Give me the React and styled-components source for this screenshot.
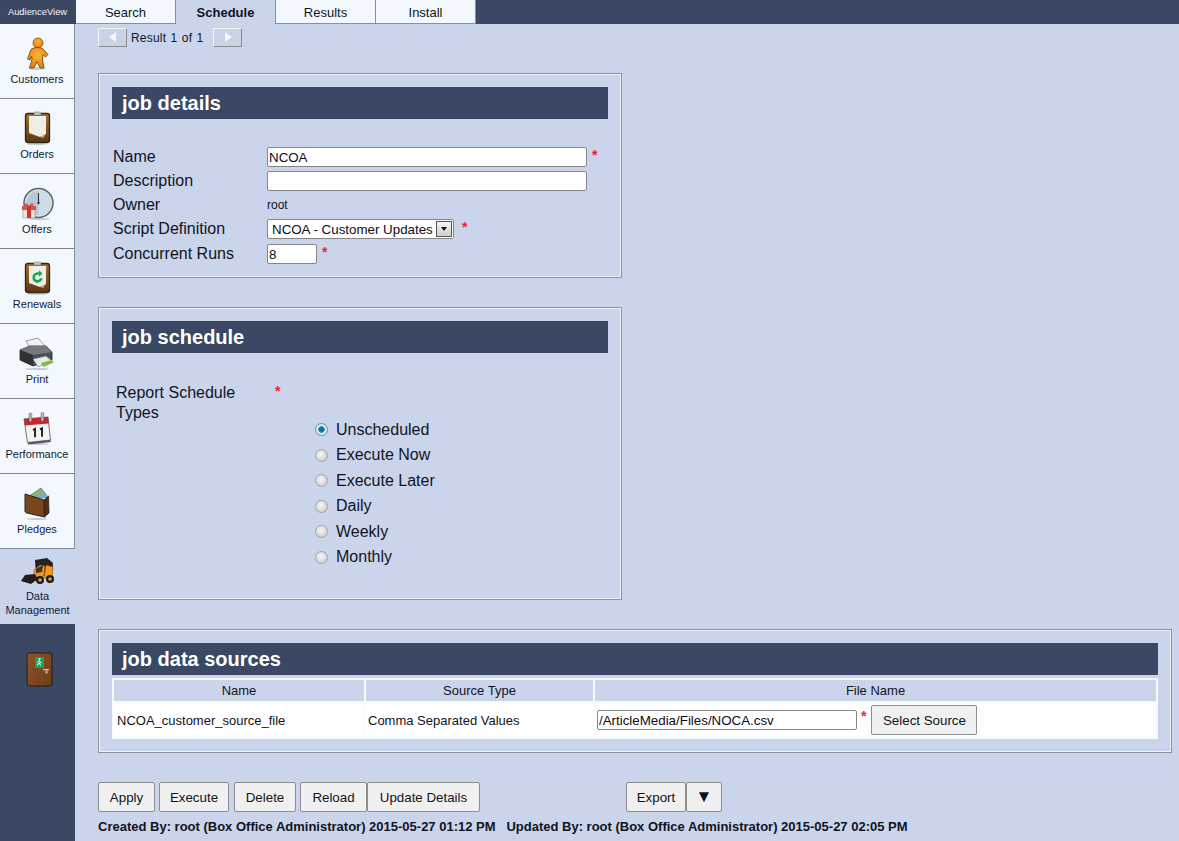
import React from 'react';
import styled, { createGlobalStyle } from 'styled-components';

const GlobalStyle = createGlobalStyle`
  html, body {
    margin: 0;
    padding: 0;
    height: 100%;
    background: #cad5ec;
    overflow: hidden;
  }
  body {
    font-family: "Liberation Sans", Arial, sans-serif;
    color: #11131c;
  }
  * { box-sizing: border-box; }
`;

const Page = styled.div`
  display: flex;
  height: 841px;
`;

const Sidebar = styled.nav`
  width: 75px;
  flex-shrink: 0;
  display: flex;
  flex-direction: column;
  background: #3a4863;
`;

const Brand = styled.div`
  height: 24px;
  color: #f2f5fb;
  font-size: 9.4px;
  line-height: 24px;
  text-align: center;
`;

const NavItem = styled.div`
  height: 75px;
  display: flex;
  flex-direction: column;
  align-items: center;
  justify-content: ${p => (p.$active ? 'flex-start' : 'flex-end')};
  padding-bottom: 12px;
  padding-top: ${p => (p.$active ? '7px' : '0')};
  background: ${p => (p.$active ? '#cad5ec' : '#f3f8fe')};
  border-right: ${p => (p.$active ? 'none' : '1px solid #8a8f99')};
  border-bottom: ${p => (p.$active ? 'none' : '1px solid #7f8590')};
  color: #0e1a33;
  font-size: 11px;
  line-height: 14px;
  text-align: center;
`;

const NavIcon = styled.svg`
  width: 36px;
  height: 36px;
  margin-bottom: 2px;
  flex-shrink: 0;
`;

const ActiveLabel = styled.div`
  margin-top: -5px;
`;

const ExitSlot = styled.div`
  display: flex;
  justify-content: center;
  padding-top: 27px;
`;

const Main = styled.main`
  flex: 1;
  min-width: 0;
`;

const TabBar = styled.div`
  height: 24px;
  display: flex;
  padding-left: 1px;
  background: #3a4863;
`;

const Tab = styled.div`
  width: 100px;
  height: 24px;
  padding-top: 5px;
  text-align: center;
  font-size: 13px;
  line-height: 15px;
  font-weight: ${p => (p.$active ? 'bold' : 'normal')};
  background: ${p => (p.$active ? '#cad5ec' : '#f3f8fe')};
  border-right: 1px solid #8a8f99;
  border-bottom: ${p => (p.$active ? 'none' : '1px solid #8a8f99')};
`;

const Content = styled.div`
  padding: 3px 8px 0 23px;
`;

const Pager = styled.div`
  display: flex;
  align-items: center;
  height: 20px;
  font-size: 12px;
`;

const PagerButton = styled.div`
  width: 29px;
  height: 19px;
  display: flex;
  align-items: center;
  justify-content: center;
  background: #c9d3e8;
  border: 1px solid;
  border-color: #f4f6fb #8b8b8b #8b8b8b #f4f6fb;
`;

const PagerText = styled.span`
  width: 86px;
  padding: 1px 0 0 4px;
  letter-spacing: 0.2px;
  word-spacing: 0.8px;
`;

const Arrow = styled.svg`
  width: 10px;
  height: 10px;
  fill: #f5f7fc;
`;

const Panel = styled.section`
  width: ${p => (p.$wide ? '1074px' : '524px')};
  height: ${p => p.$height}px;
  margin-top: ${p => p.$top}px;
  padding: 13px 13px 0 13px;
  border: 1px solid #8d9096;
  box-shadow: inset 0 0 0 1px #eef2fa;
`;

const PanelTitle = styled.h2`
  margin: 0;
  height: 32px;
  padding-left: 10px;
  background: #3a4863;
  color: #fff;
  font-size: 20px;
  line-height: 32px;
  font-weight: bold;
`;

const DetailRows = styled.div`
  padding-top: 26px;
  padding-left: 1px;
`;

const Row = styled.div`
  display: flex;
  align-items: center;
  height: 24px;
  font-size: 16px;
  &:last-child {
    margin-top: 1px;
  }
`;

const RowLabel = styled.div`
  width: 154px;
  flex-shrink: 0;
`;

const TextInput = styled.input`
  width: ${p => p.$w}px;
  height: 20px;
  padding: 0 1px 0 1px;
  border: 1px solid #858585;
  border-radius: 2px;
  background: #fff;
  color: #0b0b1a;
  font-family: "Liberation Sans", Arial, sans-serif;
  font-size: 13.33px;
  outline: none;
`;

const Required = styled.span`
  color: #f01c30;
  font-size: 14px;
  font-weight: bold;
  line-height: 14px;
  margin-left: ${p => p.$gap || 5}px;
  align-self: flex-start;
  margin-top: ${p => p.$down || 3}px;
`;

const PlainValue = styled.span`
  font-size: 12px;
`;

const SelectBox = styled.div`
  width: 187px;
  height: 20px;
  display: flex;
  align-items: center;
  justify-content: space-between;
  padding-left: 4px;
  padding-right: 1px;
  background: #fff;
  border: 1px solid #858585;
  border-radius: 2px;
  color: #0b0b1a;
  font-size: 13.33px;
  white-space: nowrap;
`;

const SelectArrow = styled.div`
  width: 16px;
  height: 16px;
  display: flex;
  align-items: center;
  justify-content: center;
  background: linear-gradient(#f6f6f6, #cfcfcf);
  border: 1px solid #555;
  &::after {
    content: '';
    border-left: 3.5px solid transparent;
    border-right: 3.5px solid transparent;
    border-top: 4px solid #111;
  }
`;

const ScheduleBody = styled.div`
  padding: 30px 0 0 4px;
  font-size: 16px;
`;

const ScheduleHead = styled.div`
  display: flex;
  height: 34px;
  line-height: 20px;
`;

const ScheduleLabel = styled.div`
  width: 158px;
`;

const RadioList = styled.div`
  padding-left: 199px;
`;

const RadioRow = styled.label`
  display: flex;
  align-items: center;
  gap: 8px;
  height: 25.5px;
`;

const Radio = styled.input`
  appearance: none;
  margin: 0;
  width: 13px;
  height: 13px;
  border-radius: 50%;
  border: 1px solid #a4a4a4;
  background: radial-gradient(circle at 45% 40%, #f8f8f8, #cfcfcf 75%);
  &:checked {
    border-color: #7b8a94;
    background: radial-gradient(circle, #0b5e92 0, #1a86bd 38%, #e6ecef 46%, #cfd5d8 100%);
  }
`;

const SourceTable = styled.table`
  width: 100%;
  margin-top: 3px;
  padding: 0 1px 0 0;
  border-spacing: 1px 2px;
  background: #f6f9fe;
  font-size: 13px;
  table-layout: fixed;
`;

const Th = styled.th`
  width: ${p => p.$w}px;
  height: 21px;
  padding: 0;
  background: #cad5ec;
  border-left: 1px solid #f6f9fe;
  font-weight: normal;
  color: #11131c;
`;

const Td = styled.td`
  height: 34px;
  padding: 0 3px;
  background: #fff;
  white-space: nowrap;
  &:first-child {
    padding-left: 4px;
  }
`;

const FileCell = styled.div`
  display: flex;
  align-items: center;
`;

const Button = styled.button`
  height: 30px;
  width: ${p => p.$w}px;
  margin-left: ${p => p.$gap || 0}px;
  padding: 0;
  background: #f0f0f0;
  border: 1px solid #8c8c8c;
  border-radius: 2px;
  color: #11131c;
  font-family: "Liberation Sans", Arial, sans-serif;
  font-size: ${p => p.$size || 13.33}px;
`;

const ActionBar = styled.div`
  display: flex;
  margin-top: 29px;
`;

const Audit = styled.div`
  margin-top: 8px;
  font-size: 13px;
  line-height: 14px;
  font-weight: bold;
  white-space: pre;
`;

// hand drawn versions of the sidebar pictures
const PersonIcon = () => (
  <NavIcon viewBox="0 0 36 36">
    <defs>
      <radialGradient id="orange" cx="0.5" cy="0.35" r="0.7">
        <stop offset="0" stopColor="#fdb531" />
        <stop offset="1" stopColor="#de7a10" />
      </radialGradient>
    </defs>
    <ellipse cx="18" cy="34.6" rx="9" ry="1.3" fill="#9aa0a8" opacity="0.5" />
    <circle cx="19" cy="9" r="5" fill="url(#orange)" stroke="#80500f" strokeWidth="0.8" />
    <path d="M12 15.5C14 13 22 13 24 15L29 20.5 26.5 23 24 20.5 23.5 26 25 34 21 34 18 27.5 15 34 10.5 34 13 25 12.5 22 11 26 8.5 25Z" fill="url(#orange)" stroke="#7a4a10" strokeWidth="0.9" strokeLinejoin="round" />
  </NavIcon>
);

const ClipboardIcon = ({ renew }) => (
  <NavIcon viewBox="0 0 36 36">
    <defs>
      <linearGradient id={renew ? 'boardR' : 'board'} x1="0" y1="0" x2="0" y2="1">
        <stop offset="0" stopColor="#a8702e" />
        <stop offset="1" stopColor="#5f3612" />
      </linearGradient>
    </defs>
    <ellipse cx="18" cy="35" rx="10" ry="1" fill="#9aa0a8" opacity="0.5" />
    <rect x="6.5" y="4.5" width="24" height="29" rx="2.5" fill={`url(#${renew ? 'boardR' : 'board'})`} stroke="#2a2723" strokeWidth="1.3" />
    <path d="M10 7h17v18l-6 3-11-4z" fill="#efede8" />
    <path d="M10 24l11 4 6-3-3 4z" fill="#cdb08c" />
    <rect x="15" y="3" width="7" height="3" rx="1" fill="#c6c6c6" stroke="#777" strokeWidth="0.5" />
    {renew && (
      <path d="M23.5 14.5l-3.5-3.2v2h-1.5a5.2 5.2 0 1 0 5.2 6h-2.7a2.6 2.6 0 1 1-2.5-3.5h1.5v2z" fill="#17a84f" />
    )}
  </NavIcon>
);

const OffersIcon = () => (
  <NavIcon viewBox="0 0 36 36">
    <ellipse cx="20" cy="35" rx="11" ry="1" fill="#9aa0a8" opacity="0.5" />
    <circle cx="19.5" cy="19" r="14.5" fill="#d4dfe8" stroke="#5d666e" strokeWidth="1.5" />
    <circle cx="19.5" cy="19" r="12" fill="#b5c8d8" />
    <path d="M19.5 7a12 12 0 0 1 0 24z" fill="#cfdde8" />
    <path d="M19.5 9v10" stroke="#333" strokeWidth="1.1" />
    <circle cx="19.5" cy="19" r="1.2" fill="#333" />
    <rect x="4" y="24" width="12" height="10" fill="#ece4dc" stroke="#8a7a70" strokeWidth="0.5" />
    <rect x="3" y="22" width="14" height="4" fill="#d9534a" />
    <rect x="8" y="22" width="4" height="12" fill="#c8352d" />
    <path d="M10 22c-2-4-6-3-4 0zM10 22c2-4 6-3 4 0z" fill="#d9534a" />
  </NavIcon>
);

const PrinterIcon = () => (
  <NavIcon viewBox="0 0 36 36">
    <ellipse cx="18" cy="35" rx="12" ry="1" fill="#9aa0a8" opacity="0.5" />
    <path d="M7 7l12-3 7 8-14 3z" fill="#f2f2f2" stroke="#777" strokeWidth="0.7" />
    <path d="M1 16l10-4 16 0 6 6v8l-19 6-13-6z" fill="#4c4f54" stroke="#222427" strokeWidth="0.8" />
    <path d="M1 16l13 5 19-3-6-6-16 0z" fill="#75787d" />
    <path d="M1 16l13 5v11l-13-6z" fill="#2f3134" />
    <path d="M14 25l13-3 6 5-14 6z" fill="#dfe9ee" stroke="#666" strokeWidth="0.5" />
    <path d="M22 29l11-3 1.5 2.5-10 4.5z" fill="#88b93f" />
  </NavIcon>
);

const CalendarIcon = () => (
  <NavIcon viewBox="0 0 36 36">
    <ellipse cx="20" cy="35" rx="10" ry="1" fill="#9aa0a8" opacity="0.5" />
    <path d="M5 10l24-2 2.5 23-23 2.5z" fill="#f4f4f4" stroke="#555" strokeWidth="0.8" />
    <path d="M5 10l24-2 .8 6.5-24 2z" fill="#c8242a" />
    <path d="M8.5 33.5l23-2.5.3 2-22.5 2.5z" fill="#555" />
    <rect x="10" y="4" width="2.8" height="9" rx="1.4" fill="#b8b8b8" stroke="#555" strokeWidth="0.5" />
    <rect x="22" y="3.5" width="2.8" height="9" rx="1.4" fill="#b8b8b8" stroke="#555" strokeWidth="0.5" />
    <path d="M14 21l2-1.2v8.5M21 20.5l2-1.2v8.5" fill="none" stroke="#111" strokeWidth="1.8" />
  </NavIcon>
);

const WalletIcon = () => (
  <NavIcon viewBox="0 0 36 36">
    <ellipse cx="18" cy="35" rx="10" ry="1" fill="#9aa0a8" opacity="0.5" />
    <path d="M10 12l12-8 7 9-19 3z" fill="#8fae7a" stroke="#5b6b4f" strokeWidth="0.6" />
    <path d="M19 11l8-1 2 3-11 2z" fill="#6db2d6" />
    <path d="M6 10l19 6 .5 17-17.5-4c-1 0-2-1-2-2z" fill="#7a4620" stroke="#2d2017" strokeWidth="1" />
    <path d="M25 16l4.5-4 .5 17-4.5 4z" fill="#55300f" stroke="#2d2017" strokeWidth="0.8" />
  </NavIcon>
);

const LoaderIcon = () => (
  <NavIcon viewBox="0 0 36 36">
    <path d="M15 4l12-2 6 5-1 13H16z" fill="#26221d" />
    <path d="M14 14l6-5 5 1-1 10-10 2zM26 9l7 2-1 10-8 1z" fill="#f39a1d" stroke="#6b430a" strokeWidth="0.5" />
    <path d="M16 13l5-3 2 0-1 6-6 1z" fill="#3a342b" />
    <path d="M15 18L5 19l-4 6 10 3 4-3 3-1z" fill="#201d1a" />
    <circle cx="20" cy="24" r="4" fill="#1b1917" />
    <circle cx="20" cy="24" r="1.8" fill="#e9a526" />
    <circle cx="30" cy="23" r="4" fill="#1b1917" />
    <circle cx="30" cy="23" r="1.8" fill="#e9a526" />
  </NavIcon>
);

const ExitIcon = () => (
  <NavIcon viewBox="0 0 36 36">
    <defs>
      <linearGradient id="door" x1="0" y1="0" x2="1" y2="1">
        <stop offset="0" stopColor="#8f5228" />
        <stop offset="1" stopColor="#6e3d18" />
      </linearGradient>
    </defs>
    <rect x="7" y="2" width="25" height="33" rx="2" fill="url(#door)" stroke="#241a14" strokeWidth="1" />
    <rect x="15" y="6" width="9" height="11" fill="#14a45a" />
    <circle cx="19.5" cy="8" r="1" fill="#fff" />
    <path d="M19.5 9.2l-1.8 2 .8 1-1 2.4M19.5 9.2l.6 2.3 1.6.6M19.1 12l1.7 2.6" fill="none" stroke="#fff" strokeWidth="1" />
    <rect x="23" y="18" width="6" height="1.2" fill="#ccc" />
    <rect x="25.5" y="19.5" width="2" height="3" fill="#bbb" />
  </NavIcon>
);

const navItems = [
  { label: 'Customers', icon: <PersonIcon /> },
  { label: 'Orders', icon: <ClipboardIcon /> },
  { label: 'Offers', icon: <OffersIcon /> },
  { label: 'Renewals', icon: <ClipboardIcon renew /> },
  { label: 'Print', icon: <PrinterIcon /> },
  { label: 'Performance', icon: <CalendarIcon /> },
  { label: 'Pledges', icon: <WalletIcon /> },
];

const tabs = ['Search', 'Schedule', 'Results', 'Install'];
const scheduleTypes = ['Unscheduled', 'Execute Now', 'Execute Later', 'Daily', 'Weekly', 'Monthly'];

const App = () => (
  <Page>
    <GlobalStyle />
    <Sidebar>
      <Brand>AudienceView</Brand>
      {navItems.map(item => (
        <NavItem key={item.label}>
          {item.icon}
          {item.label}
        </NavItem>
      ))}
      <NavItem $active>
        <LoaderIcon />
        <ActiveLabel>Data<br />Management</ActiveLabel>
      </NavItem>
      <ExitSlot>
        <ExitIcon />
      </ExitSlot>
    </Sidebar>

    <Main>
      <TabBar>
        {tabs.map(tab => (
          <Tab key={tab} $active={tab === 'Schedule'}>{tab}</Tab>
        ))}
      </TabBar>
      <Content>
        <Pager>
          <PagerButton>
            <Arrow viewBox="0 0 10 10"><path d="M8 0v10L1 5z" /></Arrow>
          </PagerButton>
          <PagerText>Result 1 of 1</PagerText>
          <PagerButton>
            <Arrow viewBox="0 0 10 10"><path d="M2 0v10l7-5z" /></Arrow>
          </PagerButton>
        </Pager>

        <Panel $height={205} $top={26}>
          <PanelTitle>job details</PanelTitle>
          <DetailRows>
            <Row>
              <RowLabel>Name</RowLabel>
              <TextInput $w={320} value="NCOA" readOnly />
              <Required>*</Required>
            </Row>
            <Row>
              <RowLabel>Description</RowLabel>
              <TextInput $w={320} value="" readOnly />
            </Row>
            <Row>
              <RowLabel>Owner</RowLabel>
              <PlainValue>root</PlainValue>
            </Row>
            <Row>
              <RowLabel>Script Definition</RowLabel>
              <SelectBox>
                NCOA - Customer Updates
                <SelectArrow />
              </SelectBox>
              <Required $gap={8}>*</Required>
            </Row>
            <Row>
              <RowLabel>Concurrent Runs</RowLabel>
              <TextInput $w={50} value="8" readOnly />
              <Required>*</Required>
            </Row>
          </DetailRows>
        </Panel>

        <Panel $height={293} $top={29}>
          <PanelTitle>job schedule</PanelTitle>
          <ScheduleBody>
            <ScheduleHead>
              <ScheduleLabel>Report Schedule<br />Types</ScheduleLabel>
              <Required $gap={1} $down={1}>*</Required>
            </ScheduleHead>
            <RadioList>
              {scheduleTypes.map((type, index) => (
                <RadioRow key={type}>
                  <Radio type="radio" name="schedule" defaultChecked={index === 0} />
                  {type}
                </RadioRow>
              ))}
            </RadioList>
          </ScheduleBody>
        </Panel>

        <Panel $wide $height={124} $top={29}>
          <PanelTitle>job data sources</PanelTitle>
          <SourceTable>
            <thead>
              <tr>
                <Th $w={251}>Name</Th>
                <Th $w={228}>Source Type</Th>
                <Th>File Name</Th>
              </tr>
            </thead>
            <tbody>
              <tr>
                <Td>NCOA_customer_source_file</Td>
                <Td>Comma Separated Values</Td>
                <Td>
                  <FileCell>
                    <TextInput $w={260} value="/ArticleMedia/Files/NOCA.csv" readOnly />
                    <Required $gap={4} $down={4}>*</Required>
                    <Button $w={106} $gap={5}>Select Source</Button>
                  </FileCell>
                </Td>
              </tr>
            </tbody>
          </SourceTable>
        </Panel>

        <ActionBar>
          <Button $w={57}>Apply</Button>
          <Button $w={70} $gap={4}>Execute</Button>
          <Button $w={62} $gap={5}>Delete</Button>
          <Button $w={67} $gap={4}>Reload</Button>
          <Button $w={113}>Update Details</Button>
          <Button $w={60} $gap={146}>Export</Button>
          <Button $w={36} $size={17}>▼</Button>
        </ActionBar>
        <Audit>Created By: root (Box Office Administrator) 2015-05-27 01:12 PM   Updated By: root (Box Office Administrator) 2015-05-27 02:05 PM</Audit>
      </Content>
    </Main>
  </Page>
);

export default App;
